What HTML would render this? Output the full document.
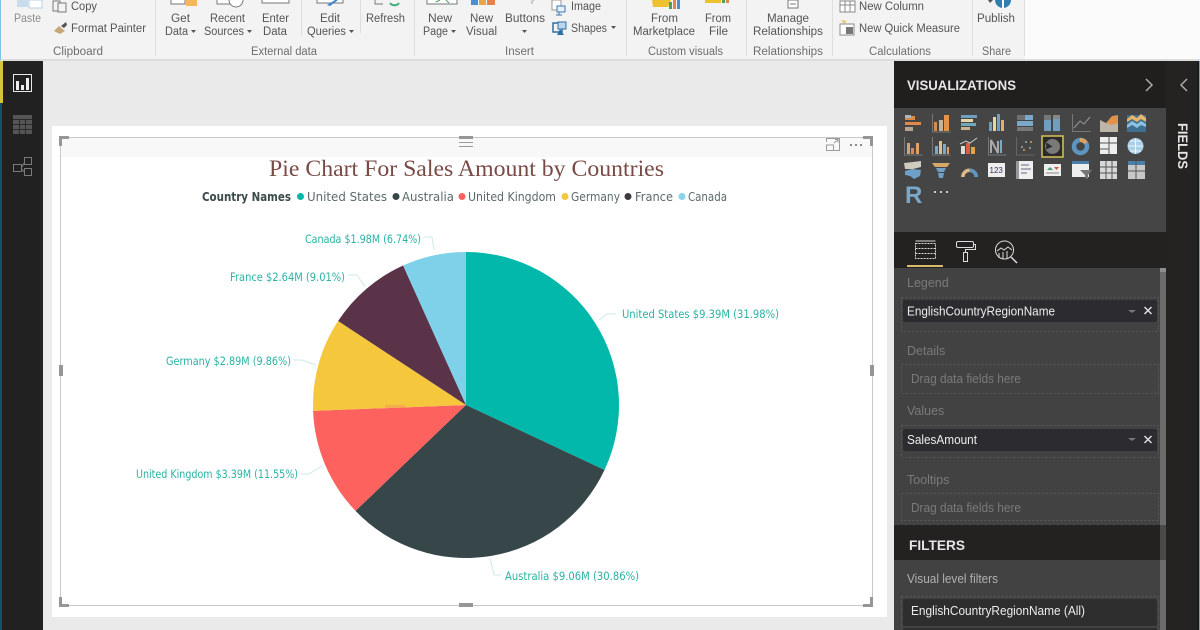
<!DOCTYPE html>
<html><head><meta charset="utf-8"><style>
html,body{margin:0;padding:0;background:#eaeaea}
svg{display:block;filter:blur(.35px)}
text{font-family:"Liberation Sans",sans-serif}
.r{font-size:11.5px;fill:#555}
.g{font-size:11.5px;fill:#6e6e6e}
.c{font-size:11.5px;fill:#2ab3a5;font-family:"DejaVu Sans",sans-serif}
.l{font-size:12px;fill:#5c6a6a;font-family:"DejaVu Sans",sans-serif}
.p{font-size:12px;fill:#8b8b8b}
.w{font-size:12.5px;fill:#ececec}
.d{font-size:12.5px;fill:#7a7a7a}
</style></head><body>
<svg width="1200" height="630" viewBox="0 0 1200 630" xmlns="http://www.w3.org/2000/svg">
<rect width="1200" height="630" fill="#eaeaea"/>
<!-- ribbon -->
<rect width="1200" height="60" fill="#f3f3f3"/>
<rect x="1025" width="175" height="60" fill="#fbfbfb"/>
<rect y="59" width="1200" height="2" fill="#dcdcdc"/>
<rect width="1" height="60" fill="#7fc4e0"/>
<g stroke="#dedede" stroke-width="1">
<path d="M155.500 0V56M301.500 0V36M360.500 0V33M414.500 0V56M626.500 0V56M746.500 0V56M832.500 0V56M972.500 0V56M1024.500 0V56"/>
</g>
<!-- ribbon icons (cropped) -->
<rect x="17" y="0" width="11" height="7" fill="#c9dcec"/><rect x="29" y="0" width="13" height="8" fill="#fff" stroke="#b9cfe0"/>
<g fill="none" stroke="#777" stroke-width="1"><rect x="53" y="1" width="7" height="10"/><rect x="58" y="3" width="8" height="9" fill="#f3f3f3"/></g>
<path d="M54 31l5-5 6 5-5 3z" fill="#c6a878"/><path d="M61 26l5-4 1 3-3 3z" fill="#555"/>
<path d="M171 0v4h14V0" fill="#fff" stroke="#777"/><rect x="186" y="0" width="11" height="6" fill="#f2b85a"/>
<path d="M217 0v4h14V0" fill="#fff" stroke="#777"/><circle cx="236" cy="0" r="7" fill="#fff" stroke="#777"/>
<path d="M262 0v3h27V0" fill="#fff" stroke="#777"/>
<path d="M317 0v3h26V0" fill="#fff" stroke="#777"/><path d="M327 5l8-5h3l-8 6z" fill="#3c86c6"/>
<path d="M375 0v4h8" fill="none" stroke="#777"/><path d="M390 3a5 4 0 0 0 9 0" fill="none" stroke="#3eaf7c" stroke-width="2"/>
<path d="M427 0v4h30V0" fill="#fff" stroke="#777"/><path d="M436 2l4-2M446 0l3 3" stroke="#4aa05a"/>
<rect x="471" y="0" width="7" height="5" fill="#4a8fcf"/><rect x="479" y="0" width="7" height="5" fill="#e8a54c"/><rect x="487" y="0" width="8" height="5" fill="#e8804c"/>
<path d="M531 2l3-2M531 3h2" stroke="#aaa" fill="none"/>
<rect x="552" y="0" width="9" height="10" fill="#fff" stroke="#999"/><rect x="557" y="6" width="8" height="6" fill="#e6f0fa" stroke="#3a78ae"/><path d="M559 12v3M556 15h6" stroke="#3a78ae"/>
<rect x="553" y="23" width="9" height="9" fill="none" stroke="#2f6ea5" stroke-width="1.500"/><rect x="558" y="22" width="8" height="7" fill="#bcd7ec" stroke="#2f6ea5"/><path d="M560 29l-3 6h7z" fill="#2f6ea5"/>
<path d="M652 0l1 7h15l3-7z" fill="#edc12f"/><rect x="669" y="2" width="3" height="7" fill="#4aa05a"/><rect x="673" y="0" width="3" height="9" fill="#e0854c"/><rect x="677" y="0" width="3" height="9" fill="#4a8fcf"/>
<rect x="705" y="0" width="16" height="3" fill="#edc12f"/><rect x="722" y="0" width="3" height="3" fill="#4aa05a"/><rect x="726" y="0" width="3" height="3" fill="#e0854c"/>
<rect x="788" y="0" width="10" height="8" fill="#fff" stroke="#777"/><path d="M790 4h6" stroke="#777"/>
<g fill="#fff" stroke="#888"><rect x="840" y="1" width="15" height="11"/><path d="M840 5h15M845 1v11M850 1v11" fill="none"/></g>
<rect x="840" y="24" width="14" height="11" fill="#fff" stroke="#888"/><rect x="846" y="27" width="7" height="7" fill="#777"/><path d="M841 20l3 4 3-3z" fill="#e8c66c"/>
<path d="M988 0l2 3 3-3z" fill="#555"/><circle cx="1003" cy="0" r="8" fill="#2f7fb5"/><path d="M1003 8V0" stroke="#fff" stroke-width="2"/>
<!-- ribbon text -->
<text x="14" y="22" class="p" textLength="27" lengthAdjust="spacingAndGlyphs">Paste</text>
<text x="71" y="10" class="r" textLength="26" lengthAdjust="spacingAndGlyphs">Copy</text>
<text x="71" y="32" class="r" textLength="75" lengthAdjust="spacingAndGlyphs">Format Painter</text>
<text x="53" y="55" class="g" textLength="50" lengthAdjust="spacingAndGlyphs">Clipboard</text>
<text x="171" y="22" class="r" textLength="19" lengthAdjust="spacingAndGlyphs">Get</text>
<text x="165" y="35" class="r" textLength="23" lengthAdjust="spacingAndGlyphs">Data</text><path d="M191 30h5l-2.500 3z" fill="#555"/>
<text x="210" y="22" class="r" textLength="35" lengthAdjust="spacingAndGlyphs">Recent</text>
<text x="204" y="35" class="r" textLength="40" lengthAdjust="spacingAndGlyphs">Sources</text><path d="M247 30h5l-2.500 3z" fill="#555"/>
<text x="262" y="22" class="r" textLength="27" lengthAdjust="spacingAndGlyphs">Enter</text>
<text x="263" y="35" class="r" textLength="24" lengthAdjust="spacingAndGlyphs">Data</text>
<text x="320" y="22" class="r" textLength="20" lengthAdjust="spacingAndGlyphs">Edit</text>
<text x="307" y="35" class="r" textLength="39" lengthAdjust="spacingAndGlyphs">Queries</text><path d="M349 30h5l-2.500 3z" fill="#555"/>
<text x="366" y="22" class="r" textLength="39" lengthAdjust="spacingAndGlyphs">Refresh</text>
<text x="251" y="55" class="g" textLength="66" lengthAdjust="spacingAndGlyphs">External data</text>
<text x="428" y="22" class="r" textLength="24" lengthAdjust="spacingAndGlyphs">New</text>
<text x="423" y="35" class="r" textLength="25" lengthAdjust="spacingAndGlyphs">Page</text><path d="M451 30h5l-2.500 3z" fill="#555"/>
<text x="470" y="22" class="r" textLength="23" lengthAdjust="spacingAndGlyphs">New</text>
<text x="466" y="35" class="r" textLength="31" lengthAdjust="spacingAndGlyphs">Visual</text>
<text x="505" y="22" class="r" textLength="40" lengthAdjust="spacingAndGlyphs">Buttons</text><path d="M522 30h5l-2.500 3z" fill="#555"/>
<text x="571" y="10" class="r" textLength="30" lengthAdjust="spacingAndGlyphs">Image</text>
<text x="571" y="32" class="r" textLength="36" lengthAdjust="spacingAndGlyphs">Shapes</text><path d="M611 26h5l-2.500 3z" fill="#555"/>
<text x="505" y="55" class="g" textLength="29" lengthAdjust="spacingAndGlyphs">Insert</text>
<text x="651" y="22" class="r" textLength="27" lengthAdjust="spacingAndGlyphs">From</text>
<text x="633" y="35" class="r" textLength="62" lengthAdjust="spacingAndGlyphs">Marketplace</text>
<text x="705" y="22" class="r" textLength="26" lengthAdjust="spacingAndGlyphs">From</text>
<text x="709" y="35" class="r" textLength="19" lengthAdjust="spacingAndGlyphs">File</text>
<text x="648" y="55" class="g" textLength="75" lengthAdjust="spacingAndGlyphs">Custom visuals</text>
<text x="767" y="22" class="r" textLength="42" lengthAdjust="spacingAndGlyphs">Manage</text>
<text x="753" y="35" class="r" textLength="70" lengthAdjust="spacingAndGlyphs">Relationships</text>
<text x="753" y="55" class="g" textLength="70" lengthAdjust="spacingAndGlyphs">Relationships</text>
<text x="859" y="10" class="r" textLength="65" lengthAdjust="spacingAndGlyphs">New Column</text>
<text x="859" y="32" class="r" textLength="101" lengthAdjust="spacingAndGlyphs">New Quick Measure</text>
<text x="869" y="55" class="g" textLength="62" lengthAdjust="spacingAndGlyphs">Calculations</text>
<text x="977" y="22" class="r" textLength="38" lengthAdjust="spacingAndGlyphs">Publish</text>
<text x="982" y="55" class="g" textLength="29" lengthAdjust="spacingAndGlyphs">Share</text>

<!-- left nav -->
<rect x="0" y="61" width="43" height="569" fill="#222121"/>
<rect x="0" y="61" width="3" height="42" fill="#d4c53c"/>
<rect x="0" y="103" width="2" height="527" fill="#11506e"/>
<rect x="13.500" y="74.500" width="18" height="17" fill="none" stroke="#e8e8e8" stroke-width="1"/>
<rect x="16" y="81" width="3" height="9" fill="#eee"/><rect x="21" y="85" width="3" height="5" fill="#eee"/><rect x="26" y="78" width="3" height="12" fill="#eee"/>
<rect x="13" y="115" width="19" height="19" fill="#555"/>
<path d="M13 119.500h19M13 124.500h19M13 129.500h19M19.500 119v15M25.500 119v15" stroke="#2a2a2a"/>
<g fill="none" stroke="#7a7a7a"><rect x="13.500" y="164.500" width="8" height="7"/><rect x="24.500" y="157.500" width="7" height="7"/><rect x="24.500" y="168.500" width="7" height="7"/><path d="M22 167l2-4M22 169l2 3"/></g>

<!-- visual card -->
<rect x="52" y="126" width="835" height="491" fill="#fff"/>
<rect x="60" y="137" width="812" height="20" fill="#f8f8f8"/>
<rect x="60.500" y="137.500" width="812" height="468" fill="none" stroke="#c8c8c8"/>
<g fill="#969696">
<path d="M59 136h10v3h-7v7h-3z"/><path d="M863 136h10v10h-3v-7h-7z"/>
<path d="M59 597h3v7h7v3H59z"/><path d="M870 597h3v10h-10v-3h7z"/>
<rect x="459" y="136" width="14" height="3"/><rect x="459" y="603" width="14" height="4"/>
<rect x="59" y="365" width="4" height="11"/><rect x="870" y="365" width="4" height="11"/>
</g>
<path d="M459 142.500h14M459 146.500h14" stroke="#9a9a9a"/>
<g fill="none" stroke="#9c9c9c"><path d="M826.500 142v-3.500h13v12h-6M826.500 145v5.500h7v-5.500z"/><path d="M834 143l4-3M835 139.500h3v3"/></g>
<g fill="#8a8a8a"><rect x="850" y="144" width="2" height="2"/><rect x="855" y="144" width="2" height="2"/><rect x="860" y="144" width="2" height="2"/></g>

<text x="269" y="176" style="font-family:'Liberation Serif',serif;font-size:23px;fill:#7a4a46" textLength="395" lengthAdjust="spacingAndGlyphs">Pie Chart For Sales Amount by Countries</text>
<text x="202" y="201" class="l" style="font-weight:bold;fill:#3b4a4a" textLength="89" lengthAdjust="spacingAndGlyphs">Country Names</text>
<circle cx="300.500" cy="196.500" r="3.500" fill="#01b8aa"/><text x="307" y="201" class="l" textLength="80" lengthAdjust="spacingAndGlyphs">United States</text>
<circle cx="396" cy="196.500" r="3.500" fill="#374649"/><text x="402" y="201" class="l" textLength="52" lengthAdjust="spacingAndGlyphs">Australia</text>
<circle cx="462" cy="196.500" r="3.500" fill="#fd625e"/><text x="468" y="201" class="l" textLength="88" lengthAdjust="spacingAndGlyphs">United Kingdom</text>
<circle cx="565" cy="196.500" r="3.500" fill="#f5c73c"/><text x="571" y="201" class="l" textLength="49" lengthAdjust="spacingAndGlyphs">Germany</text>
<circle cx="628" cy="196.500" r="3.500" fill="#3f3a40"/><text x="635" y="201" class="l" textLength="38" lengthAdjust="spacingAndGlyphs">France</text>
<circle cx="682" cy="196.500" r="3.500" fill="#8ad4eb"/><text x="688" y="201" class="l" textLength="39" lengthAdjust="spacingAndGlyphs">Canada</text>

<!-- pie -->
<path d="M466 405V252A153 153 0 0 1 604.500 470Z" fill="#01b8aa"/>
<path d="M466 405L604.500 470A153 153 0 0 1 355.500 510.900Z" fill="#374649"/>
<path d="M466 405L355.500 510.900A153 153 0 0 1 313.100 410.900Z" fill="#fd625e"/>
<path d="M466 405L313.100 410.900A153 153 0 0 1 338.100 321Z" fill="#f5c73c"/>
<path d="M466 405L338.100 321A153 153 0 0 1 403.100 265.500Z" fill="#5a3349"/>
<path d="M466 405L403.100 265.500A153 153 0 0 1 466 252Z" fill="#7fd1ea"/>
<rect x="385" y="405" width="20" height="3" fill="#f59a5a" opacity=".6"/>
<!-- leader lines -->
<g fill="none" stroke="#cdeae7" stroke-width="1">
<path d="M424 237h8l2 13"/><path d="M348 275h9l8 12"/><path d="M294 360h8l14 5"/><path d="M301 474h8l13-8"/><path d="M599 320l8-6h9"/><path d="M490 558l4 17h7"/>
</g>
<text x="305" y="243" class="c" textLength="116" lengthAdjust="spacingAndGlyphs">Canada $1.98M (6.74%)</text>
<text x="230" y="281" class="c" textLength="115" lengthAdjust="spacingAndGlyphs">France $2.64M (9.01%)</text>
<text x="166" y="365" class="c" textLength="125" lengthAdjust="spacingAndGlyphs">Germany $2.89M (9.86%)</text>
<text x="136" y="478" class="c" textLength="162" lengthAdjust="spacingAndGlyphs">United Kingdom $3.39M (11.55%)</text>
<text x="622" y="318" class="c" textLength="157" lengthAdjust="spacingAndGlyphs">United States $9.39M (31.98%)</text>
<text x="505" y="580" class="c" textLength="134" lengthAdjust="spacingAndGlyphs">Australia $9.06M (30.86%)</text>

<!-- right panels -->
<rect x="894" y="61" width="306" height="569" fill="#424242"/>
<rect x="894" y="61" width="272" height="47" fill="#201f1e"/>
<rect x="1166" y="61" width="34" height="569" fill="#252321"/>
<rect x="1197" y="61" width="2" height="569" fill="#1e1c1a"/>
<rect x="1199" y="61" width="1" height="569" fill="#5fa9c4"/>
<text x="907" y="90" style="font-size:14px;font-weight:bold;fill:#e6e6e6" textLength="109" lengthAdjust="spacingAndGlyphs">VISUALIZATIONS</text>
<path d="M1146 79l6 6-6 6" fill="none" stroke="#aaa" stroke-width="1.500"/>
<path d="M1187 79l-6 6 6 6" fill="none" stroke="#aaa" stroke-width="1.500"/>
<text transform="translate(1178,123) rotate(90)" style="font-size:13.500px;font-weight:bold;fill:#e6e6e6" textLength="46" lengthAdjust="spacingAndGlyphs">FIELDS</text>
<rect x="894" y="108" width="272" height="124" fill="#454545"/>

<!-- viz icons row 1 -->
<g>
<rect x="905" y="116" width="10" height="4" fill="#d98b4a"/><rect x="905" y="122" width="16" height="3" fill="#e0894a"/><rect x="905" y="127" width="8" height="4" fill="#b6a48c"/><rect x="905" y="115" width="6" height="3" fill="#a9b7c4"/>
<rect x="934" y="122" width="3" height="9" fill="#d98b4a"/><rect x="939" y="120" width="4" height="11" fill="#c2b29a"/><rect x="944" y="115" width="5" height="16" fill="#e4914a"/><path d="M932.500 114v18h18" fill="none" stroke="#777"/>
<rect x="961" y="115" width="16" height="3" fill="#6f9fc0"/><rect x="961" y="119" width="12" height="3" fill="#e6d3a8"/><rect x="961" y="123" width="15" height="3" fill="#6fa8b8"/><rect x="961" y="127" width="9" height="3" fill="#c8b48c"/>
<rect x="989" y="122" width="3" height="9" fill="#6f9fc0"/><rect x="993" y="117" width="3" height="14" fill="#e6d3a8"/><rect x="997" y="114" width="3" height="17" fill="#6f9fc0"/><rect x="1001" y="120" width="3" height="11" fill="#e0b06a"/>
<rect x="1017" y="115" width="16" height="5" fill="#6e6e6e"/><rect x="1017" y="121" width="16" height="5" fill="#7aa8c8"/><rect x="1017" y="127" width="16" height="4" fill="#777"/><rect x="1025" y="115" width="8" height="5" fill="#7aa8c8"/>
<rect x="1044" y="115" width="7" height="16" fill="#6f9fc0"/><rect x="1053" y="115" width="7" height="16" fill="#6f9fc0"/><rect x="1044" y="115" width="7" height="5" fill="#777"/><rect x="1053" y="115" width="7" height="4" fill="#888"/>
<path d="M1072.500 114v17.500h18" fill="none" stroke="#777"/><path d="M1074 128l6-7 4 3 6-7" fill="none" stroke="#999"/>
<path d="M1100 120l6 3 6-4 6 2v11h-18z" fill="#bdb5a8"/><path d="M1106 123l6-7 6-1v8l-6 2z" fill="#e0914a"/>
<rect x="1127" y="115" width="19" height="17" fill="#3f6f90"/><path d="M1127 119l5-4 5 3 4-4 5 4v4l-5-3-4 3-5-3-5 3z" fill="#e6b66a"/><path d="M1127 125l5-4 5 3 4-3 5 3v3l-5-2-4 3-5-3-5 3z" fill="#8cc1e0"/>
</g>
<!-- row 2 -->
<g>
<path d="M904.500 137v18h18" fill="none" stroke="#777"/><rect x="907" y="143" width="3" height="11" fill="#c8a878"/><rect x="911" y="148" width="3" height="6" fill="#e0894a"/><rect x="916" y="143" width="3" height="11" fill="#e0a06a"/>
<path d="M932.500 137v18h18" fill="none" stroke="#777"/><rect x="935" y="146" width="3" height="8" fill="#7aa8c8"/><rect x="939" y="141" width="3" height="13" fill="#d8c098"/><rect x="943" y="144" width="3" height="10" fill="#7aa8c8"/><rect x="947" y="147" width="2" height="7" fill="#e0a06a"/>
<rect x="961" y="146" width="4" height="8" fill="#ddd"/><rect x="966" y="143" width="4" height="11" fill="#d85f3c"/><rect x="971" y="147" width="4" height="7" fill="#e6a44a"/><path d="M960 144l6-3 4 2 7-5" fill="none" stroke="#ccc"/>
<path d="M988.500 137v18h18" fill="none" stroke="#777"/><path d="M991 153v-13l7 13v-12" fill="none" stroke="#aaa" stroke-width="2"/><path d="M1001 140v13" stroke="#7aa8c8" stroke-width="2"/>
<path d="M1016.500 137v18h18" fill="none" stroke="#666"/><g fill="#9aa"><circle cx="1022" cy="147" r="1"/><circle cx="1026" cy="142" r="1"/><circle cx="1030" cy="148" r="1"/></g><circle cx="1024" cy="150" r="1" fill="#d8a060"/><circle cx="1031" cy="142" r="1" fill="#d8a060"/>
<rect x="1042" y="136" width="21" height="21" fill="#2b2b2b" stroke="#d8c45a" stroke-width="1.500"/><circle cx="1052.500" cy="146.500" r="7.500" fill="#7a7a7a"/><path d="M1052.500 146.500l-6-4-.5 7z" fill="#2b2b2b"/>
<circle cx="1080.500" cy="146.500" r="6.500" fill="none" stroke="#5c96c0" stroke-width="4.500"/><path d="M1080 140a7 7 0 0 1 6 3" fill="none" stroke="#e0a060" stroke-width="4"/>
<rect x="1100" y="137" width="17" height="17" fill="#eee"/><path d="M1100 143h17M1100 149h9M1109 137v17" stroke="#555"/>
<circle cx="1135.500" cy="146" r="8" fill="#a8cfe6"/><path d="M1128 146h15M1135.500 138v16M1130 141h11M1130 151h11" stroke="#fff" stroke-width=".8"/>
</g>
<!-- row 3 -->
<g>
<path d="M904 163l9-1 8-1v6l-8 2-8 0z" fill="#d0cac0"/><path d="M905 171l7-2 9 1-1 6-6 3-4-3-5-1z" fill="#6fa0c8"/>
<path d="M932 163h18l-3 4h-12z" fill="#d8a868"/><path d="M936 168h10l-2 4h-6z" fill="#6fa0c8"/><path d="M938 173h6l-1 5h-4z" fill="#6fa0c8"/>
<path d="M961 177a8.500 8.500 0 0 1 17 0h-3.500a5 5 0 0 0-10 0z" fill="#e0b888"/><path d="M969.500 168.500a8.500 8.500 0 0 1 8.500 8.500h-3.500a5 5 0 0 0-5-5z" fill="#5c96c0"/>
<rect x="988" y="163" width="17" height="14" fill="#eee"/><text x="989.500" y="173" style="font-size:8px;fill:#335">123</text>
<rect x="1016" y="161" width="17" height="18" fill="#eee"/><rect x="1016" y="161" width="3" height="18" fill="#999"/><path d="M1021 165h8M1021 169h10M1021 173h6" stroke="#668"/>
<rect x="1044" y="164" width="17" height="12" fill="#eee"/><path d="M1047 170l3-3 3 3z" fill="#4a9a6a"/><path d="M1054 167h5l-2.500 3z" fill="#c85a4a"/><path d="M1046 173h13" stroke="#888"/>
<rect x="1072" y="161" width="17" height="16" fill="#eee"/><rect x="1072" y="161" width="17" height="3" fill="#4a7ea8"/><path d="M1080 170h12l-4 5v4l-3-1v-3z" fill="#777"/>
<rect x="1100" y="161" width="17" height="18" fill="#d8d8d8"/><path d="M1100 167h17M1100 173h17M1106 161v18M1112 161v18" stroke="#555"/>
<rect x="1128" y="161" width="17" height="18" fill="#c8c8c8"/><rect x="1128" y="161" width="17" height="4" fill="#4a7ea8"/><path d="M1128 171h17M1136 161v18" stroke="#555"/>
</g>
<text x="905" y="203" style="font-size:24px;font-weight:bold;fill:#78a8cc">R</text>
<g fill="#cfcfcf"><rect x="934" y="191" width="2" height="2"/><rect x="940" y="191" width="2" height="2"/><rect x="946" y="191" width="2" height="2"/></g>

<!-- tabs -->
<rect x="894" y="232" width="272" height="36" fill="#232221"/>
<rect x="907" y="265" width="36" height="2" fill="#d8bb6c"/>
<g fill="none" stroke="#dcdcdc" stroke-width="1">
<path d="M915.500 241h20"/>
<rect x="915.500" y="243.500" width="20" height="15" stroke-dasharray="2 1"/><path d="M915.500 248.500h20M915.500 253.500h20" stroke-dasharray="2 1"/>
<rect x="956.500" y="241.500" width="17" height="6" rx="1.500"/><path d="M973.500 244.500h2v5h-10v3"/><rect x="963.500" y="252.500" width="4" height="9"/>
<circle cx="1004.500" cy="250" r="9"/><path d="M1011 257l6 6" stroke-width="1.500"/><path d="M997 251l4-3 3 2 4-3 4 3M999 258v-5M1003 259v-7M1007 259v-8"/>
</g>

<!-- wells -->
<rect x="1160" y="268" width="6" height="362" fill="#6c6c6c"/>
<rect x="1160" y="268" width="6" height="4" fill="#8d8d8d"/>
<text x="907" y="287" class="d">Legend</text>
<g fill="none" stroke="#585858" stroke-dasharray="2 2">
<rect x="901.500" y="297.500" width="257" height="34"/>
<rect x="901.500" y="364.500" width="257" height="29"/>
<rect x="901.500" y="425.500" width="257" height="32"/>
<rect x="901.500" y="493.500" width="257" height="27"/>
<rect x="901.500" y="596.500" width="257" height="32"/>
</g>
<rect x="903" y="300" width="254" height="22" rx="2" fill="#2c2c30"/>
<text x="907" y="315.500" class="w" textLength="148" lengthAdjust="spacingAndGlyphs">EnglishCountryRegionName</text>
<path d="M1128 310h8l-4 3z" fill="#777"/>
<path d="M1144.500 307l7 7M1151.500 307l-7 7" stroke="#ddd" stroke-width="1.500"/>
<text x="907" y="355" class="d">Details</text>
<text x="911" y="383" class="d" textLength="110" lengthAdjust="spacingAndGlyphs">Drag data fields here</text>
<text x="907" y="415" class="d">Values</text>
<rect x="903" y="429" width="254" height="22" rx="2" fill="#2c2c30"/>
<text x="907" y="444" class="w" textLength="70" lengthAdjust="spacingAndGlyphs">SalesAmount</text>
<path d="M1128 438h8l-4 3z" fill="#777"/>
<path d="M1144.500 436l7 7M1151.500 436l-7 7" stroke="#ddd" stroke-width="1.500"/>
<text x="907" y="484" class="d">Tooltips</text>
<text x="911" y="512" class="d" textLength="110" lengthAdjust="spacingAndGlyphs">Drag data fields here</text>
<rect x="894" y="525" width="266" height="35" fill="#232221"/>
<rect x="1160" y="525" width="6" height="35" fill="#4a4a4a"/>
<text x="909" y="550" style="font-size:14px;font-weight:bold;fill:#e6e6e6" textLength="56" lengthAdjust="spacingAndGlyphs">FILTERS</text>
<text x="907" y="583" style="font-size:12.500px;fill:#b0b0b0" textLength="91" lengthAdjust="spacingAndGlyphs">Visual level filters</text>
<rect x="903" y="599" width="254" height="27" rx="2" fill="#2e2e2e"/>
<text x="911" y="615" class="w" textLength="174" lengthAdjust="spacingAndGlyphs">EnglishCountryRegionName  (All)</text>
<rect x="903" y="628" width="254" height="2" fill="#2e2e2e"/>
</svg>
</body></html>
